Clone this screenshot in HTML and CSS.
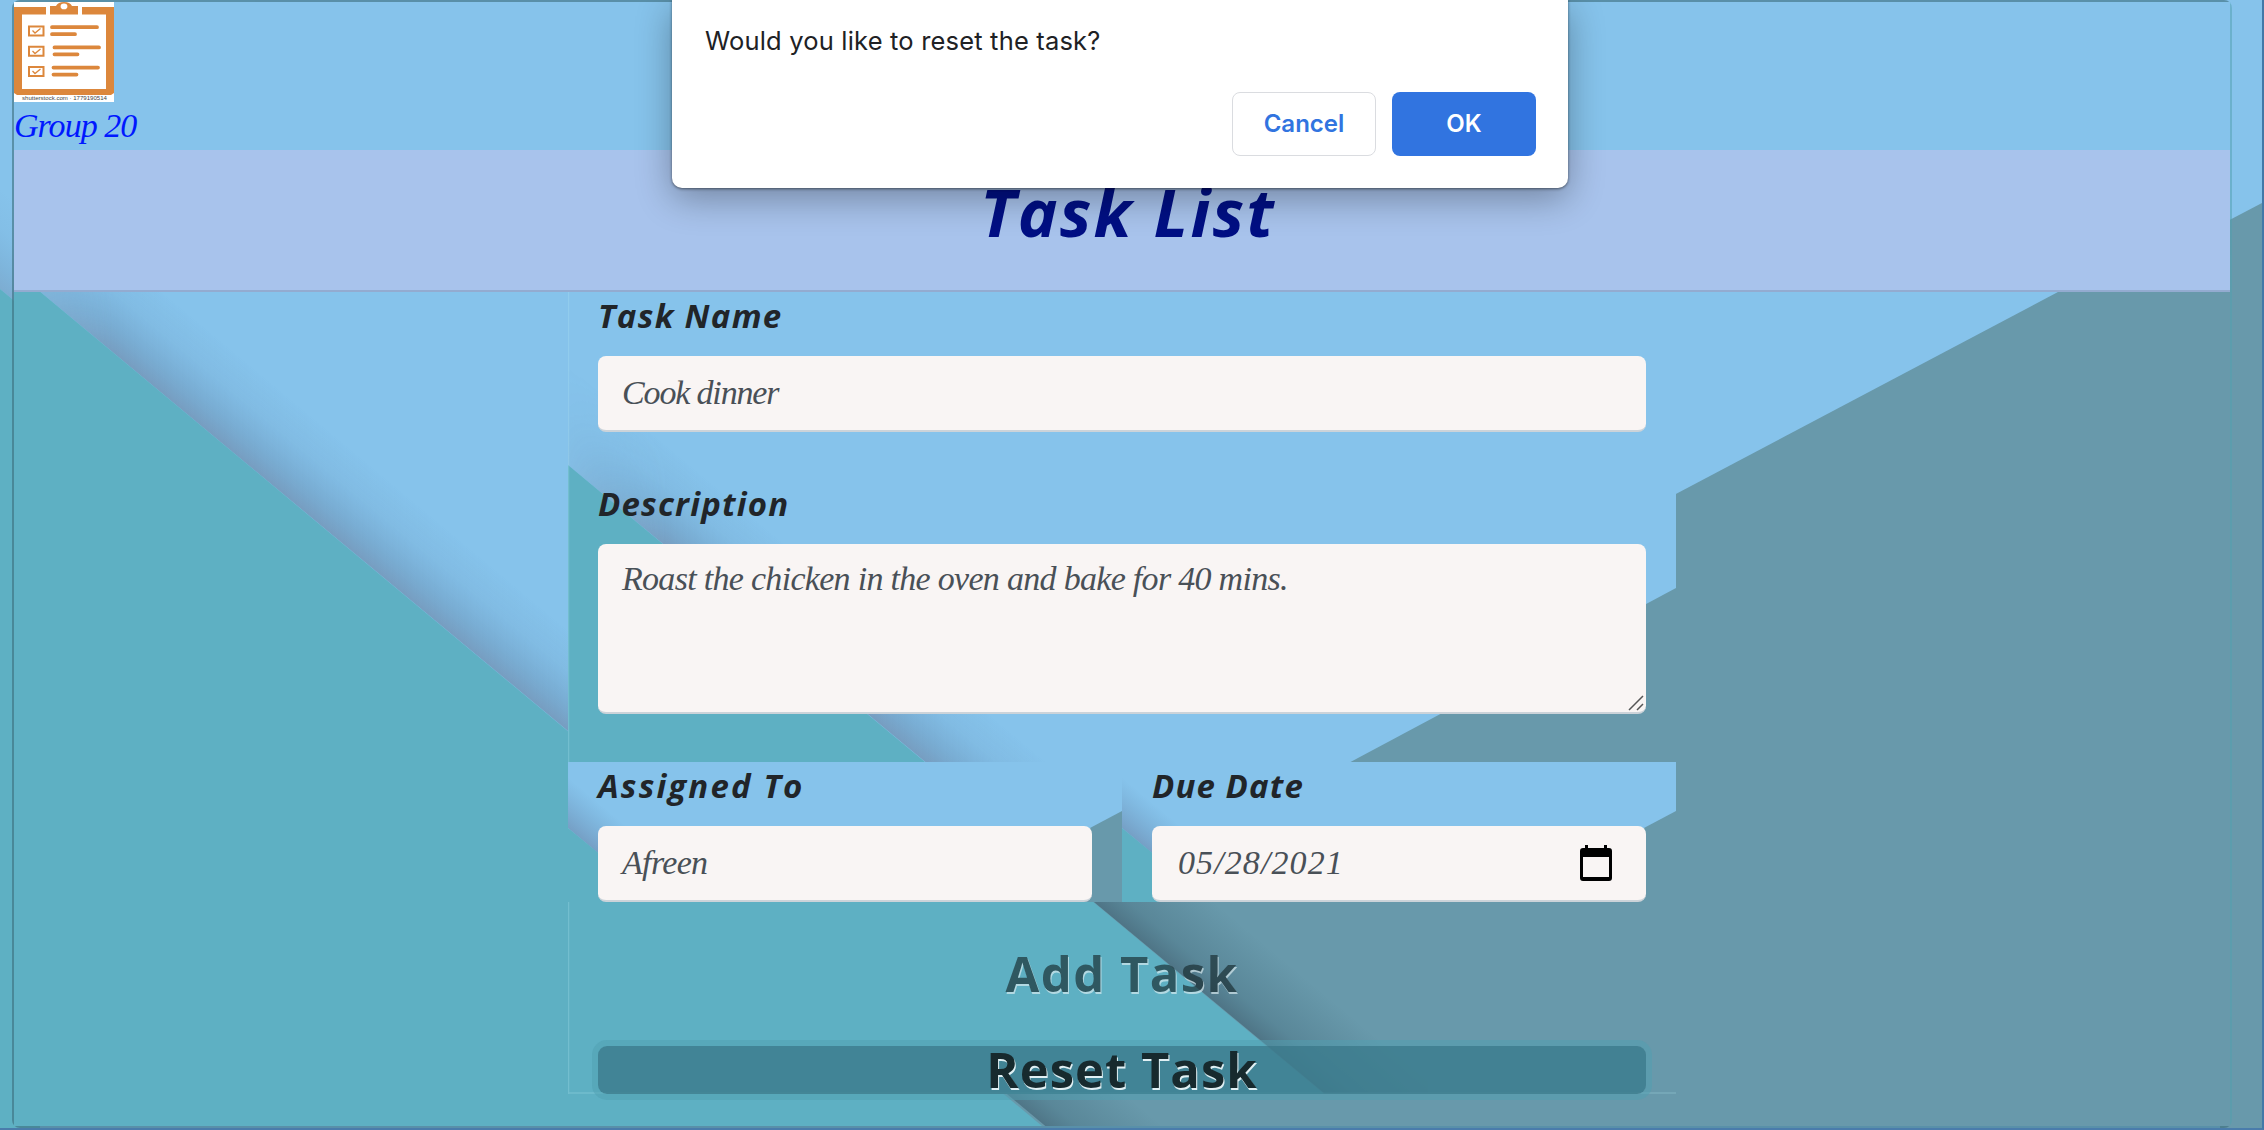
FILE: index.html
```html
<!DOCTYPE html>
<html lang="en">
<head>
<meta charset="utf-8">
<title>Task List</title>
<link rel="stylesheet" href="styles.css">
</head>
<body>
<svg width="0" height="0" class="defs">
  <defs>
    <linearGradient id="shade" gradientUnits="userSpaceOnUse" x1="0" y1="0" x2="50" y2="-60">
      <stop offset="0" stop-color="#584c64" stop-opacity=".32"/>
      <stop offset=".25" stop-color="#4a5a78" stop-opacity=".22"/>
      <stop offset=".6" stop-color="#4a6a90" stop-opacity=".08"/>
      <stop offset="1" stop-color="#4a6a90" stop-opacity="0"/>
    </linearGradient>
    <linearGradient id="shade-small" gradientUnits="userSpaceOnUse" x1="0" y1="0" x2="25" y2="-30">
      <stop offset="0" stop-color="#504c6c" stop-opacity=".3"/>
      <stop offset="1" stop-color="#4a6a90" stop-opacity="0"/>
    </linearGradient>
    <linearGradient id="deep" gradientUnits="userSpaceOnUse" x1="0" y1="0" x2="50" y2="-60">
      <stop offset="0" stop-color="#203040" stop-opacity=".36"/>
      <stop offset=".3" stop-color="#204050" stop-opacity=".2"/>
      <stop offset="1" stop-color="#204050" stop-opacity="0"/>
    </linearGradient>
    <linearGradient id="fade" gradientUnits="userSpaceOnUse" x1="0" y1="0" x2="100" y2="0">
      <stop offset="0" stop-color="#fff" stop-opacity=".15"/>
      <stop offset="1" stop-color="#fff"/>
    </linearGradient>
    <mask id="ease" maskUnits="userSpaceOnUse" x="0" y="-300" width="1400" height="1400">
      <rect y="-300" width="1400" height="1400" fill="url(#fade)"/>
    </mask>
  </defs>
</svg>
<div class="page">
  <svg class="scene" viewBox="0 0 2262 1128">
    <rect width="2262" height="1128" fill="#86c3eb"/>
    <g transform="translate(0 289)"><path d="M0 0L60 50V-100H0Z" fill="url(#shade)" opacity=".6"/></g>
    <path d="M0 289L40 322V1130H0Z" fill="#5eb0c3"/>
    <path d="M2262 203L2220 225V1130H2262Z" fill="#6899ab"/>
  </svg>
  <div class="container">
    <svg class="scene" viewBox="0 0 2216 1124">
      <rect width="2216" height="1124" fill="#86c3eb"/>
      <path d="M2216 199L928 880V1124H2216Z" fill="#6899ab"/>
      <g transform="translate(0 268)">
        <path mask="url(#ease)" d="M0 0L554 461H700V-200H0Z" fill="url(#shade)"/>
        <path d="M780 647L1160 963V640Z" fill="url(#deep)"/>
      </g>
      <path d="M0 268L1028 1124H0Z" fill="#5eb0c3"/>
    </svg>
    <header class="nav">
      <svg class="logo" viewBox="0 0 100 100">
        <rect width="100" height="100" fill="#fff"/>
        <path d="M0 5H32V12.500H8V87H92V12.500H68V5H100V91L97 93H3L0 91Z" fill="#dc873c"/>
        <path fill-rule="evenodd" d="M36 4H42Q44 0 50 0T58 4H64V12.500H36ZM50 1.600A3.400 2.800 0 1 0 50 7.200A3.400 2.800 0 1 0 50 1.600Z" fill="#dc873c"/>
        <g fill="none" stroke="#dc873c" stroke-width="2">
          <path d="M15 24.500H29.500V33.500H15ZM15 44.700H29.500V53.700H15ZM15 65H29.500V74H15Z"/>
          <path stroke-width="1.300" d="M18.500 28.500L21 31L26.500 26.500M18.500 49L21 51.500L26.500 47M18.500 69L21 71.500L26.500 67"/>
          <path stroke-width="3.800" stroke-linecap="round" d="M38 25.200H83M38 32.200H61M40.500 45.400H85M40.500 52.300H63.500M39.500 65.600H84M39.500 72.600H62.500"/>
        </g>
        <text x="8" y="98" font-size="5" textLength="85" lengthAdjust="spacingAndGlyphs" class="credit">shutterstock.com · 1779190514</text>
      </svg>
      <a class="brand">Group 20</a>
    </header>
    <div class="banner"><h1>Task List</h1></div>
    <form class="form">
      <svg class="scene" viewBox="0 0 1108 802">
        <rect width="1108" height="802" fill="#86c3eb"/>
        <path d="M1108 296L500 621V802H1108Z" fill="#6899ab"/>
        <g transform="translate(0 173)">
          <path mask="url(#ease)" d="M0 0L420 349H600V-170H0Z" fill="url(#shade)"/>
          <path d="M420 349L756 628H860V437H420Z" fill="url(#deep)"/>
        </g>
        <path d="M0 173L756 802H0Z" fill="#5eb0c3"/>
        <path d="M.5 0V802M0 801H1108" fill="none" stroke="#b4e6f5" stroke-opacity=".25" stroke-width="1.500"/>
      </svg>
      <div class="field name"><label class="l-name">Task Name</label><div class="input"><span class="t-name">Cook dinner</span></div></div>
      <div class="field desc"><label class="l-desc">Description</label>
        <div class="input area"><span class="t-desc">Roast the chicken in the oven and bake for 40 mins.</span>
          <svg class="grip" viewBox="0 0 16 16"><path d="M1 15L15 1M9 15L15 9" stroke="#555" stroke-width="1.500"/></svg>
        </div>
      </div>
      <div class="row">
        <div class="field col">
          <svg class="scene" viewBox="0 0 554 140">
            <rect width="554" height="140" fill="#86c3eb"/>
            <path d="M554 49L420 120V140H554Z" fill="#6899ab"/>
            <g transform="translate(0 66)"><path d="M0 0L60 50V-60H0Z" fill="url(#shade-small)"/></g>
            <path d="M0 66L90 140H0Z" fill="#5eb0c3"/>
          </svg>
          <label class="l-assign">Assigned To</label><div class="input"><span class="t-assign">Afreen</span></div>
        </div>
        <div class="field col">
          <svg class="scene" viewBox="0 0 554 140">
            <rect width="554" height="140" fill="#86c3eb"/>
            <path d="M554 49L420 120V140H554Z" fill="#6899ab"/>
            <g transform="translate(0 66)"><path d="M0 0L60 50V-60H0Z" fill="url(#shade-small)"/></g>
            <path d="M0 66L90 140H0Z" fill="#5eb0c3"/>
          </svg>
          <label class="l-due">Due Date</label>
          <div class="input date"><span class="t-date">05/28/2021</span>
            <svg class="cal" viewBox="0 0 32 36"><path fill-rule="evenodd" d="M5 0H8V3H24V0H27V3H29Q32 3 32 6V33Q32 36 29 36H3Q0 36 0 33V6Q0 3 3 3H5ZM3 12V32H29V12Z"/></svg>
          </div>
        </div>
      </div>
      <button type="button" class="btn add"><span>Add Task</span></button>
      <button type="button" class="btn reset"><span>Reset Task</span></button>
    </form>
  </div>
  <div class="dialog">
    <p>Would you like to reset the task?</p>
    <div class="actions"><button type="button" class="cancel">Cancel</button><button type="button" class="ok">OK</button></div>
  </div>
</div>
</body>
</html>
```
FILE: styles.css
```css
* { box-sizing: border-box; }
body { margin: 0; overflow: hidden; }
.defs { position: absolute; }
.page {
  position: relative;
  isolation: isolate;
  width: 2264px;
  height: 1130px;
  padding: 0 30px 0 12px;
  border-right: 2px solid #4279a8;
  border-bottom: 2px solid #4a7cab;
}
.scene {
  position: absolute;
  inset: 0;
  width: 100%;
  height: 100%;
  z-index: -1;
}
.container {
  position: relative;
  isolation: isolate;
  width: 2220px;
  height: 1128px;
  border: 2px solid rgba(60, 110, 125, .6);
  border-right-color: rgba(80, 160, 175, .5);
  border-radius: 8px;
}
.nav { height: 148px; }
.logo { display: block; width: 100px; height: 100px; }
.credit { font-family: "Liberation Sans", sans-serif; fill: #444; }
.brand {
  display: block;
  font: italic 34px/48px "Apple Chancery", "Liberation Serif", serif;
  color: #0018ff;
  letter-spacing: -.95px;
}
.banner {
  height: 142px;
  background: #a8c3ec;
  border-bottom: 2px solid #93abd0;
}
h1 {
  margin: 0;
  padding-left: 12px;
  font: italic 700 67px/122px "Open Sans", sans-serif;
  letter-spacing: 2.200px;
  color: #000f84;
  text-align: center;
}
.form {
  position: relative;
  isolation: isolate;
  width: 1108px;
  height: 802px;
  margin-left: 554px;
}
.field { padding: 0 30px; }
label {
  display: block;
  height: 64px;
  font: italic 700 33px/48px "Open Sans", sans-serif;
  color: #212529;
}
.l-name { letter-spacing: 1.300px; }
.l-desc { letter-spacing: 1.200px; }
.l-assign { letter-spacing: 2.150px; }
.l-due { letter-spacing: 1.100px; }
.name { height: 188px; }
.desc { height: 282px; }
.input {
  height: 76px;
  padding: 0 24px;
  font: italic 34px/74px "Apple Chancery", "Liberation Serif", serif;
  color: #495057;
  background: #f9f5f4;
  border-bottom: 2px solid #ccd3d9;
  border-radius: 8px;
}
.input span { white-space: nowrap; }
.t-name { letter-spacing: -1.150px; }
.t-desc { letter-spacing: -.7px; }
.t-assign { letter-spacing: -.65px; }
.t-date { letter-spacing: 1.100px; }
.area { position: relative; height: 170px; line-height: 70px; }
.grip { position: absolute; right: 2px; bottom: 1px; width: 16px; height: 16px; }
.row { display: flex; height: 140px; }
.col { position: relative; isolation: isolate; width: 554px; }
.date {
  display: flex;
  justify-content: space-between;
  padding: 0 34px 0 26px;
}
.cal { width: 32px; height: 36px; margin-top: 19px; }
.btn {
  display: flex;
  justify-content: center;
  width: 1048px;
  height: 48px;
  margin: 0 30px;
  padding: 0;
  border: 0;
  border-radius: 9px;
  background: none;
  font: 700 49px/46px "Open Sans", sans-serif;
  letter-spacing: 1px;
  color: #172a2e;
  text-shadow: 1px 2px 0 #e0f0f4;
}
.add { margin-top: 48px; opacity: .65; letter-spacing: 1.450px; }
.reset {
  margin-top: 48px;
  background: rgba(60, 124, 142, .85);
  box-shadow: 0 0 0 6px rgba(80, 160, 178, .5);
}
.dialog {
  position: absolute;
  top: 0;
  left: 672px;
  width: 896px;
  height: 188px;
  padding: 24px 32px 32px 33px;
  background: #fff;
  border-radius: 0 0 10px 10px;
  box-shadow: 0 1px 3px rgba(0, 0, 0, .5), 0 10px 36px rgba(0, 0, 0, .32);
  font-family: Inter, sans-serif;
}
.dialog p {
  margin: 0;
  height: 68px;
  font-size: 25.500px;
  line-height: 34px;
  letter-spacing: .18px;
  color: #202124;
}
.actions { display: flex; justify-content: flex-end; gap: 16px; }
.actions button {
  width: 144px;
  height: 64px;
  padding: 0 0 2px;
  border-radius: 8px;
  font: 600 24px Inter, sans-serif;
}
.cancel { color: #3174e0; background: #fff; border: 1.500px solid #dadce0; }
.ok { color: #fff; background: #3174e0; border: 0; }
```
